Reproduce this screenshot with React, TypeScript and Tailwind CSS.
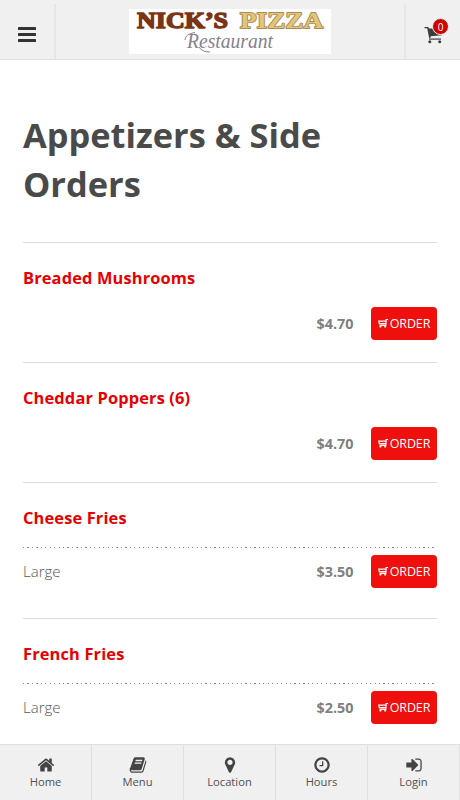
import type { ReactNode } from 'react';

const icons = {
  home: 'M1472 992v480q0 26-19 45t-45 19h-384v-384h-256v384h-384q-26 0-45-19t-19-45v-480q0-1 .5-3t.5-3l575-474 575 474q1 2 1 6zm223-69l-62 74q-8 9-21 11h-3q-13 0-21-7l-692-577-692 577q-12 8-24 7-13-2-21-11l-62-74q-8-10-7-23.5t11-21.5l719-599q32-26 76-26t76 26l244 204v-195q0-14 9-23t23-9h192q14 0 23 9t9 23v408l219 182q10 8 11 21.5t-7 23.5z',
  book: 'M1703 478q40 57 18 129l-275 906q-19 64-76.5 107.5t-122.5 43.5h-923q-77 0-148.5-53.5t-99.5-131.5q-24-67-2-127 0-4 3-27t4-37q1-8-3-21.5t-3-19.5q2-11 8-21t16.5-23.5 16.5-23.5q23-38 45-91.5t30-91.5q3-10 .5-30t-.5-28q3-11 17-28t17-23q21-36 42-92t25-90q1-9-2.5-32t.5-28q4-13 22-30.5t22-22.5q19-26 42.5-84.5t27.5-96.5q1-8-3-25.5t-2-26.5q2-8 9-18t18-23 17-21q8-12 16.5-30.5t15-35 16-36 19.5-32 26.5-23.5 36-11.5 47.5 5.5l-1 3q38-9 51-9h761q74 0 114 56t18 130l-274 906q-36 119-71.5 153.5t-128.5 34.5h-869q-27 0-38 15-11 16-1 43 24 70 144 70h923q29 0 56-15.5t35-41.5l300-987q7-22 5-57 38 15 59 43zm-1064 2q-4 13 2 22.5t20 9.5h608q13 0 25.5-9.5t16.5-22.5l21-64q4-13-2-22.5t-20-9.5h-608q-13 0-25.5 9.5t-16.5 22.5zm-83 256q-4 13 2 22.5t20 9.5h608q13 0 25.5-9.5t16.5-22.5l21-64q4-13-2-22.5t-20-9.5h-608q-13 0-25.5 9.5t-16.5 22.5z',
  marker: 'M1152 640q0-106-75-181t-181-75-181 75-75 181 75 181 181 75 181-75 75-181zm256 0q0 109-33 179l-364 774q-16 33-47.5 52t-67.5 19-67.5-19-46.5-52l-365-774q-33-70-33-179 0-212 150-362t362-150 362 150 150 362z',
  clock: 'M1024 544v448q0 14-9 23t-23 9h-320q-14 0-23-9t-9-23v-64q0-14 9-23t23-9h224v-352q0-14 9-23t23-9h64q14 0 23 9t9 23zm416 352q0-148-73-273t-198-198-273-73-273 73-198 198-73 273 73 273 198 198 273 73 273-73 198-198 73-273zm224 0q0 209-103 385.5t-279.5 279.5-385.5 103-385.5-103-279.5-279.5-103-385.5 103-385.5 279.5-279.5 385.5-103 385.5 103 279.5 279.5 103 385.5z',
  login: 'M1312 896q0 26-19 45l-544 544q-19 19-45 19t-45-19-19-45v-288h-448q-26 0-45-19t-19-45v-384q0-26 19-45t45-19h448v-288q0-26 19-45t45-19 45 19l544 544q19 19 19 45zm352-352v704q0 119-84.5 203.5t-203.5 84.5h-320q-13 0-22.5-9.5t-9.5-22.5q0-4-1-20t-.5-26.5 3-23.5 10-19.5 20.5-6.5h320q66 0 113-47t47-113v-704q0-66-47-113t-113-47h-312l-11.5-1-11.5-3-8-5.5-7-9-2-13.5q0-4-1-20t-.5-26.5 3-23.5 10-19.5 20.5-6.5h320q119 0 203.5 84.5t84.5 203.5z',
};

function Logo() {
  return (
    <svg width="202" height="45" viewBox="0 0 202 45" className="overflow-visible bg-white" role="img" aria-label="Nick's Pizza Restaurant">
      <g fontFamily="'Liberation Serif', serif" fontWeight="700" fontSize="24" strokeLinejoin="round">
        <text x="8" y="18.5" textLength="91" lengthAdjust="spacingAndGlyphs" fill="#7b3415" stroke="#7b3415" strokeWidth="1.5">NICK’S</text>
        <text x="111" y="18.5" textLength="83" lengthAdjust="spacingAndGlyphs" fill="#e3c578" stroke="#a98d55" strokeWidth="1.8" paintOrder="stroke">PIZZA</text>
      </g>
      <text x="58" y="39" textLength="86" lengthAdjust="spacingAndGlyphs" fontFamily="'Liberation Serif', serif" fontStyle="italic" fontSize="21" fill="#85828f">Restaurant</text>
      <path d="M56 31q0-6 10-7.500M70 38q3 5 11 5" fill="none" stroke="#85828f" strokeWidth="1" />
    </svg>
  );
}

function HeaderCart() {
  return (
    <svg width="19" height="17" viewBox="0 0 19 17" fill="#3c3c3c">
      <path d="M.5 0h3.700l.8 1.500H11l5 6h2v.8L6.500 9.200l.2 1.600-1.500.4L3.200 1.200H.5z" />
      <path d="M5 11.500h12v1.200H5z" />
      <circle cx="5.800" cy="14.700" r="1.500" />
      <circle cx="15.700" cy="14.700" r="1.500" />
    </svg>
  );
}

function OrderCart() {
  return (
    <svg width="10" height="10" viewBox="0 0 10 10" fill="none" stroke="#fff" strokeWidth="1.200" className="-mt-px">
      <path d="M10 1.500H8.200L7.800 7.400H1.500M8 3.200H.8l.5 2.400h6.600" />
      <rect x="1.500" y="8" width="1.800" height="1.500" fill="#fff" stroke="none" />
      <rect x="6.300" y="8" width="1.800" height="1.500" fill="#fff" stroke="none" />
    </svg>
  );
}

function PriceRow({ label, price }: { label?: string; price: string }) {
  return (
    <div className="flex h-[34px] items-center text-[15px] text-[#777]">
      <span className="font-light text-[#555]">{label}</span>
      <span className="ml-auto pt-[2px] text-[14.4px] font-bold text-[#808080]">{price}</span>
      <button className="mt-px ml-[17.500px] flex h-[33px] w-[66px] items-center justify-center gap-[2px] rounded-[4px] bg-[#ef0f0d] text-[12.5px] leading-none text-white">
        <OrderCart />
        <span className="pt-px tracking-[-0.1px]">ORDER</span>
      </button>
    </div>
  );
}

function DottedRule() {
  return <div className="mt-[16px] h-px bg-[repeating-linear-gradient(90deg,#888_0_1.200px,transparent_1.200px_4.450px)]" />;
}

function Item({ name, children, className }: { name: string; children: ReactNode; className: string }) {
  return (
    <section className={`border-t border-[#dedede] pt-[23px] ${className}`}>
      <h2 className="h-[25px] text-[16.400px] leading-6 font-bold tracking-[0.15px] text-[#e60000]">{name}</h2>
      {children}
    </section>
  );
}

function Tab({ icon, label }: { icon: string; label: string }) {
  return (
    <a className="flex flex-1 flex-col items-center border-r border-[#e0e0e0] pt-[11px] text-[#444]">
      <svg width="18" height="18" viewBox="0 0 1792 1792" fill="currentColor"><path d={icon} /></svg>
      <span className="text-[11.200px] leading-[16px] text-[#505050]">{label}</span>
    </a>
  );
}

export default function App() {
  return (
    <div className="flex h-[800px] w-[460px] flex-col overflow-hidden bg-white font-['Open_Sans',sans-serif]">
      <header className="flex h-[60px] shrink-0 items-stretch justify-between border-b border-[#e2e2e2] bg-[#f0f0f0]">
        <div className="mt-1 flex w-[56px] items-center justify-center border-r-2 border-[#e7e7e7] pt-[5px]">
          <svg width="18" height="15" viewBox="0 0 18 15" fill="#333">
            <rect y="0" width="18" height="3" rx=".6" />
            <rect y="6" width="18" height="3" rx=".6" />
            <rect y="12" width="18" height="3" rx=".6" />
          </svg>
        </div>
        <div className="pt-[9px]"><Logo /></div>
        <div className="mt-1 flex w-[56px] justify-center border-l-2 border-[#e7e7e7] pt-[23px]">
          <div className="relative h-[17px] w-[18px]">
            <HeaderCart />
            <span className="absolute -top-[9px] left-[8px] flex size-[17px] items-center justify-center rounded-full border border-[#f0f0f0] bg-[#cf0000] text-[10px] leading-none text-white">0</span>
          </div>
        </div>
      </header>
      <main className="h-[684px] overflow-hidden px-[23px]">
        <h1 className="h-[182px] pt-[50px] text-[34.400px] leading-[49px] font-bold text-[#4a4a4a]">Appetizers &amp; Side<br />Orders</h1>
        <Item name="Breaded Mushrooms" className="h-[120px]">
          <div className="mt-[15px]"><PriceRow price="$4.70" /></div>
        </Item>
        <Item name="Cheddar Poppers (6)" className="h-[120px]">
          <div className="mt-[15px]"><PriceRow price="$4.70" /></div>
        </Item>
        <Item name="Cheese Fries" className="h-[136px]">
          <DottedRule />
          <div className="mt-[6px]"><PriceRow label="Large" price="$3.50" /></div>
        </Item>
        <Item name="French Fries" className="h-[136px]">
          <DottedRule />
          <div className="mt-[6px]"><PriceRow label="Large" price="$2.50" /></div>
        </Item>
      </main>
      <nav className="flex h-14 shrink-0 border-t border-[#e0e0e0] bg-[#f0f0f0]">
        <Tab icon={icons.home} label="Home" />
        <Tab icon={icons.book} label="Menu" />
        <Tab icon={icons.marker} label="Location" />
        <Tab icon={icons.clock} label="Hours" />
        <Tab icon={icons.login} label="Login" />
      </nav>
    </div>
  );
}
